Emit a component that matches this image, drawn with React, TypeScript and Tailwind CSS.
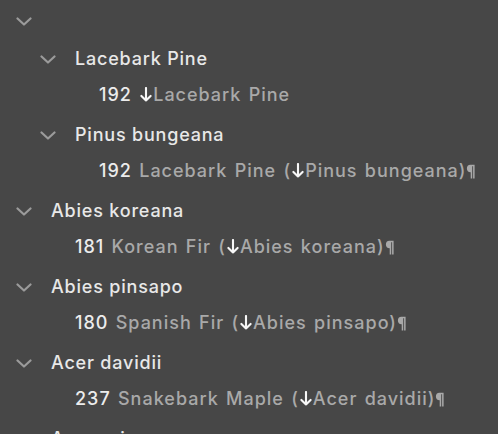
import React from "react";

type Seg = { t: string; c: "num" | "dim" | "arrow" | "pil" };
type RowT =
  | { kind: "h"; level: number; text: string }
  | { kind: "i"; level: number; segs: Seg[] };

const rows: RowT[] = [
  { kind: "h", level: 0, text: "" },
  { kind: "h", level: 1, text: "Lacebark Pine" },
  {
    kind: "i",
    level: 1,
    segs: [
      { t: "192 ", c: "num" },
      { t: "", c: "arrow" },
      { t: "Lacebark Pine", c: "dim" },
    ],
  },
  { kind: "h", level: 1, text: "Pinus bungeana" },
  {
    kind: "i",
    level: 1,
    segs: [
      { t: "192 ", c: "num" },
      { t: "Lacebark Pine (", c: "dim" },
      { t: "", c: "arrow" },
      { t: "Pinus bungeana)", c: "dim" },
      { t: "", c: "pil" },
    ],
  },
  { kind: "h", level: 0, text: "Abies koreana" },
  {
    kind: "i",
    level: 0,
    segs: [
      { t: "181 ", c: "num" },
      { t: "Korean Fir (", c: "dim" },
      { t: "", c: "arrow" },
      { t: "Abies koreana)", c: "dim" },
      { t: "", c: "pil" },
    ],
  },
  { kind: "h", level: 0, text: "Abies pinsapo" },
  {
    kind: "i",
    level: 0,
    segs: [
      { t: "180 ", c: "num" },
      { t: "Spanish Fir (", c: "dim" },
      { t: "", c: "arrow" },
      { t: "Abies pinsapo)", c: "dim" },
      { t: "", c: "pil" },
    ],
  },
  { kind: "h", level: 0, text: "Acer davidii" },
  {
    kind: "i",
    level: 0,
    segs: [
      { t: "237 ", c: "num" },
      { t: "Snakebark Maple (", c: "dim" },
      { t: "", c: "arrow" },
      { t: "Acer davidii)", c: "dim" },
      { t: "", c: "pil" },
    ],
  },
  { kind: "h", level: 0, text: "Acer griseum" },
];

function Chevron() {
  return (
    <svg width="16" height="9" viewBox="0 0 16 9" className="shrink-0">
      <path
        d="M1.5 1.5 L8 7.5 L14.5 1.5"
        fill="none"
        stroke="#9b9b9b"
        strokeWidth="2.2"
        strokeLinecap="round"
        strokeLinejoin="round"
      />
    </svg>
  );
}

function Arrow() {
  return (
    <svg
      width="14"
      height="15"
      viewBox="0 0 14 15"
      className="inline-block align-[-1px]"
    >
      <path
        d="M7 1 V13.5 M2.4 8.9 L7 13.5 L11.6 8.9"
        fill="none"
        stroke="#f7f7f7"
        strokeWidth="2.1"
        strokeLinecap="round"
        strokeLinejoin="round"
      />
    </svg>
  );
}

function Pilcrow() {
  return (
    <svg
      width="10"
      height="15"
      viewBox="0 0 10 15"
      className="inline-block align-[-2px]"
    >
      <path
        d="M4.5 0.8 H8.6 V14.5 H7.1 V2.2 H6.2 V14.5 H4.7 V8.2 A3.7 3.7 0 0 1 4.5 0.8 Z"
        fill="#a9a9a9"
      />
    </svg>
  );
}

export default function App() {
  return (
    <div
      className="w-[498px] h-[434px] overflow-hidden bg-[#474747] text-[18px] font-medium tracking-[0.8px]"
      style={{ fontFamily: "Inter, 'Noto Sans', sans-serif" }}
    >
      {rows.map((r, idx) =>
        r.kind === "h" ? (
          <div
            key={idx}
            className="h-[38px] flex items-start"
            style={{ paddingLeft: 16 + 24 * r.level }}
          >
            <div className="mt-[17px]">
              <Chevron />
            </div>
            <div className="ml-[19px] mt-[9px] leading-[24px] text-[#e8e8e8] whitespace-nowrap">
              {r.text}
            </div>
          </div>
        ) : (
          <div
            key={idx}
            className="h-[38px] flex items-start"
            style={{ paddingLeft: 75 + 24 * r.level }}
          >
            <div className="mt-[7px] leading-[24px] whitespace-nowrap tracking-[1px] [word-spacing:1.5px]">
              {r.segs.map((s, j) =>
                s.c === "arrow" ? (
                  <Arrow key={j} />
                ) : s.c === "pil" ? (
                  <Pilcrow key={j} />
                ) : (
                  <span
                    key={j}
                    className={s.c === "num" ? "text-[#ececec]" : "text-[#a9a9a9]"}
                  >
                    {s.t}
                  </span>
                )
              )}
            </div>
          </div>
        )
      )}
    </div>
  );
}
